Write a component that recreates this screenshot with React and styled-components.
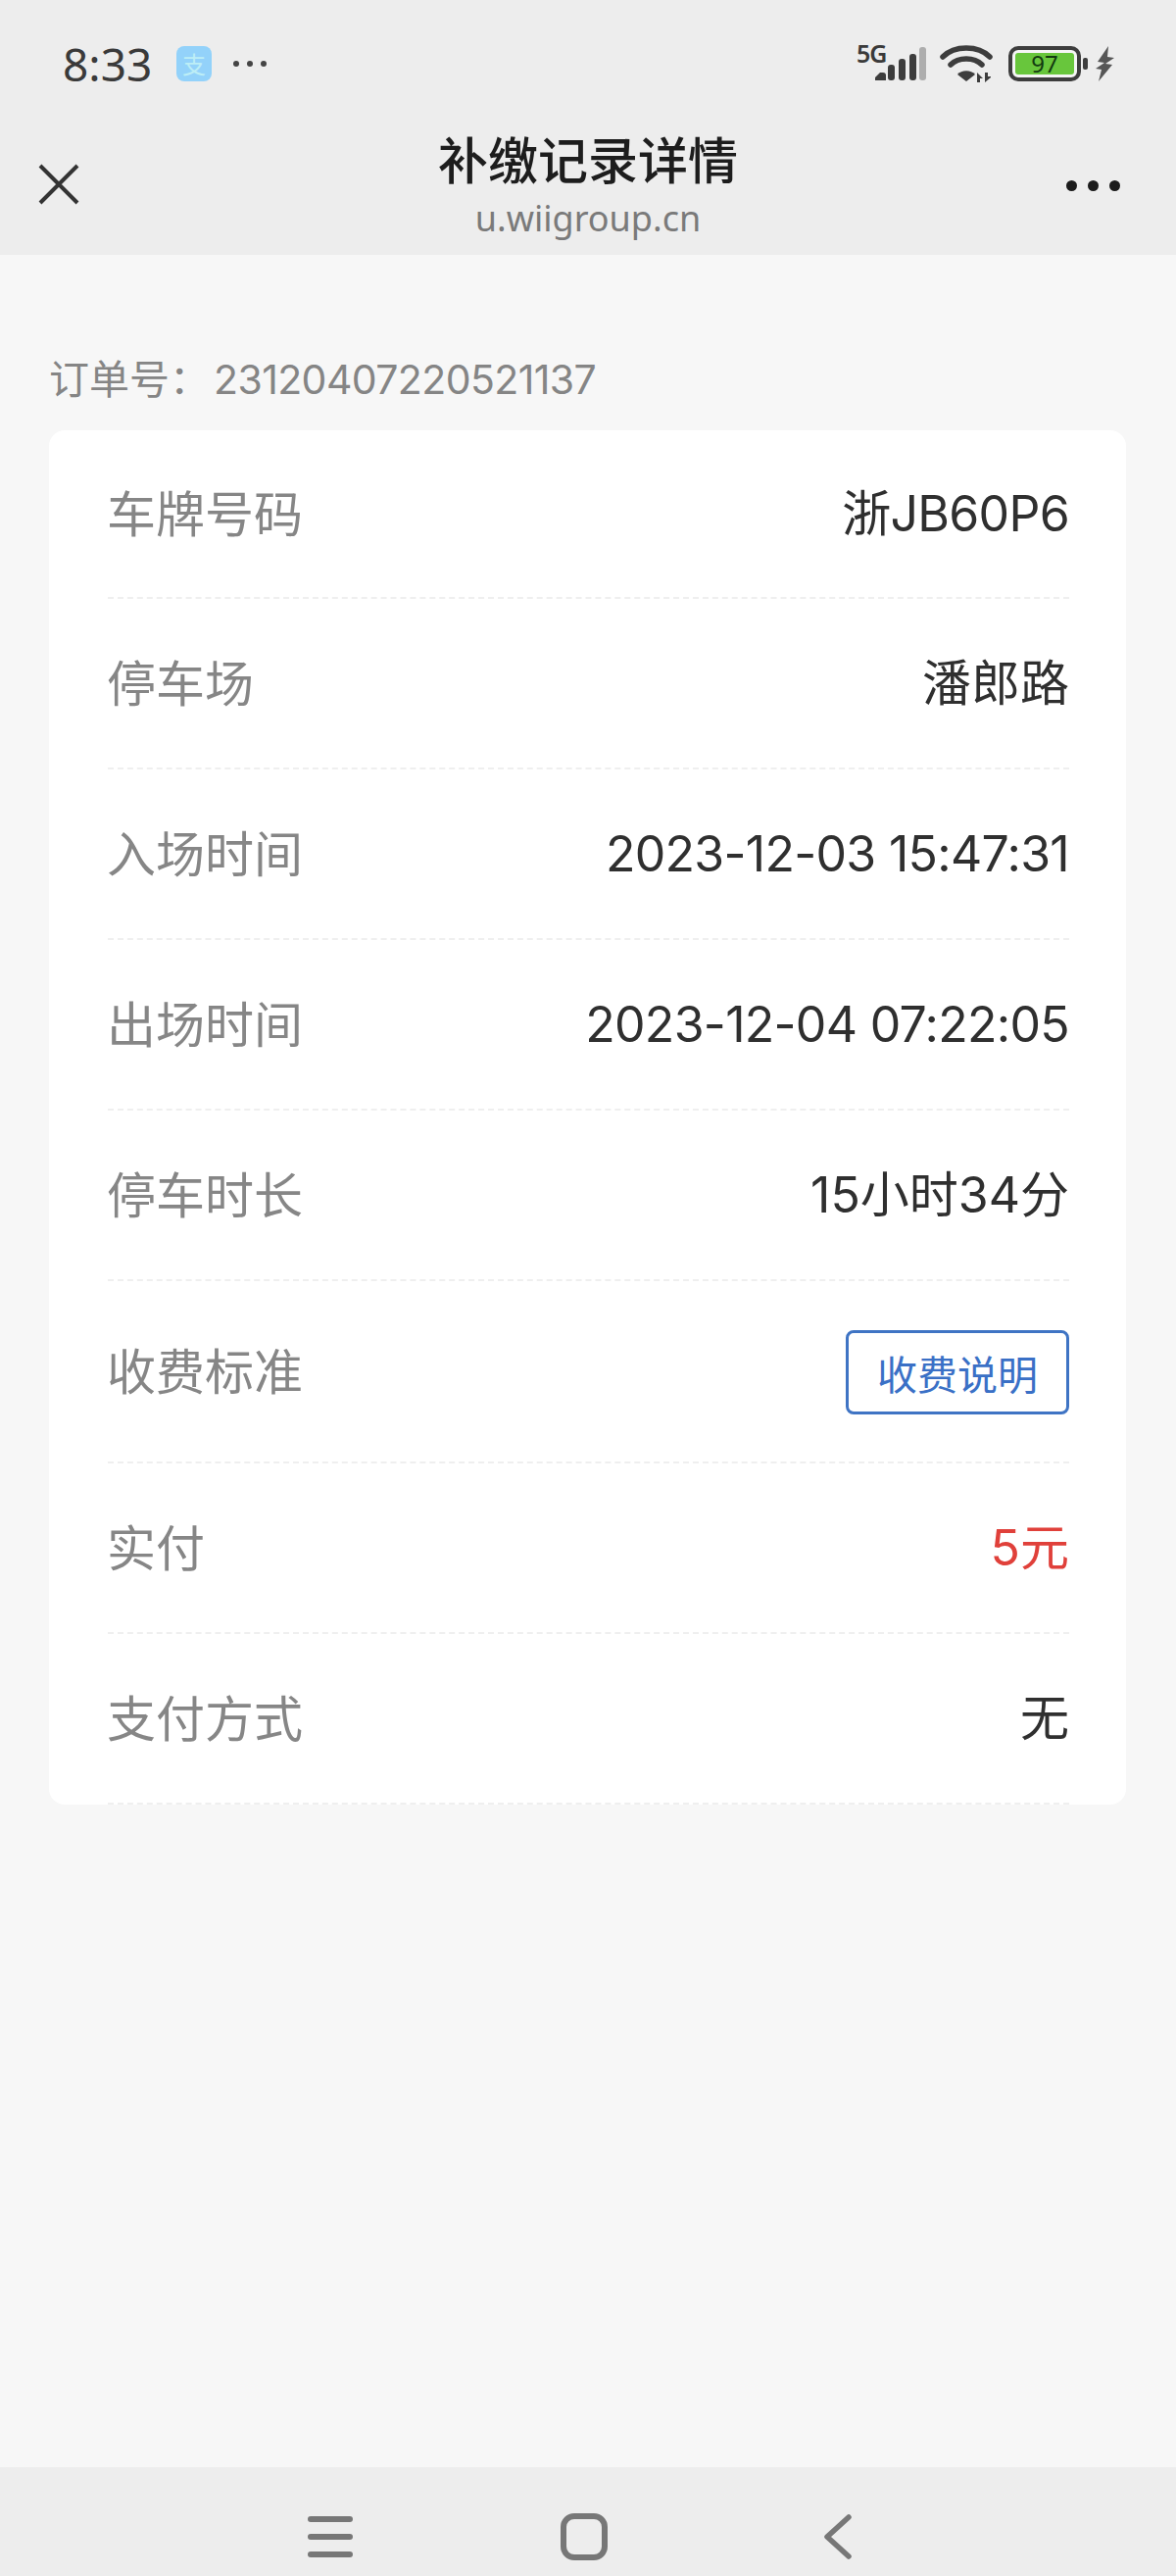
import styled, { createGlobalStyle } from "styled-components";

const GlobalStyle = createGlobalStyle`
    html, body {
        margin: 0;
        padding: 0;
        background: #f7f7f7;
    }
    * {
        box-sizing: border-box;
    }
`;

const FONT = `"Noto Sans CJK SC", "Noto Sans", sans-serif`;
const LATIN_FONT = `Inter, "Noto Sans CJK SC", sans-serif`;

const Page = styled.div`
    width: 1200px;
    height: 2628px;
    display: flex;
    flex-direction: column;
    background: #f7f7f7;
    font-family: ${FONT};
    overflow: hidden;
`;

const Header = styled.header`
    height: 260px;
    background: #ededed;
    display: flex;
    flex-direction: column;
`;

const StatusBar = styled.div`
    height: 130px;
    padding: 0 62px 0 64px;
    display: flex;
    align-items: center;
    justify-content: space-between;
`;

const StatusLeft = styled.div`
    display: flex;
    align-items: center;
`;

const Time = styled.span`
    font-family: "Noto Sans", sans-serif;
    font-size: 46px;
    line-height: 50px;
    color: #3a3a3a;
    width: 116px;
`;

const AppBadge = styled.span`
    width: 36px;
    height: 36px;
    border-radius: 8px;
    background: #93d2fa;
    color: #bdeef6;
    font-size: 24px;
    line-height: 36px;
    text-align: center;
`;

const MoreDots = styled.div`
    margin-left: 22px;
    display: flex;
    gap: 8px;
`;

const SmallDot = styled.i`
    width: 6px;
    height: 6px;
    border-radius: 50%;
    background: #444;
`;

const StatusRight = styled.div`
    display: flex;
    align-items: center;
    height: 40px;
`;

const SignalWrap = styled.div`
    position: relative;
    width: 69px;
    height: 38px;
`;

const FiveG = styled.span`
    position: absolute;
    left: -2px;
    top: -3px;
    font-family: "Noto Sans", sans-serif;
    font-size: 25px;
    font-weight: 600;
    line-height: 22px;
    letter-spacing: -1px;
    color: #3a3a3a;
`;

const SignalIcon = styled.svg`
    position: absolute;
    left: 17px;
    top: 2px;
`;

const WifiIcon = styled.svg`
    margin-left: 14px;
`;

const Battery = styled.div`
    margin-left: 16px;
    width: 74px;
    height: 36px;
    border: 4px solid #3d3d3d;
    border-radius: 10px;
    padding: 3px;
    background: #f5f5f5;
`;

const BatteryLevel = styled.div`
    width: 100%;
    height: 100%;
    background: #68c63c;
    border-radius: 3px;
    color: #123a10;
    font-family: "Noto Sans", sans-serif;
    font-size: 24px;
    line-height: 22px;
    text-align: center;
`;

const BatteryTip = styled.i`
    margin-left: 2px;
    width: 5px;
    height: 12px;
    border-radius: 2px;
    background: #3d3d3d;
`;

const BoltIcon = styled.svg`
    margin-left: 8px;
`;

const NavBar = styled.div`
    height: 130px;
    padding: 0 57px;
    display: grid;
    grid-template-columns: 1fr auto 1fr;
    align-items: center;
`;

const CloseIcon = styled.svg`
    margin: -14px 0 0 -18px;
`;

const TitleBlock = styled.div`
    display: flex;
    flex-direction: column;
    align-items: center;
    margin-top: -15px;
`;

const Title = styled.h1`
    margin: 0;
    font-size: 51px;
    font-weight: 500;
    line-height: 60px;
    color: #1d1d1d;
`;

const Subtitle = styled.div`
    margin-top: 10px;
    font-family: "Noto Sans", sans-serif;
    font-size: 36px;
    line-height: 44px;
    color: #7a7a7a;
`;

const NavDots = styled.div`
    justify-self: end;
    display: flex;
    gap: 11px;
    margin-top: -12px;
`;

const NavDot = styled.i`
    width: 11px;
    height: 11px;
    border-radius: 50%;
    background: #1c1c1c;
`;

const Main = styled.main`
    flex: 1;
    padding: 98px 51px 0 50px;
`;

const OrderNo = styled.div`
    height: 52px;
    margin-bottom: 29px;
    font-size: 41px;
    line-height: 52px;
    color: #858585;
`;

const OrderDigits = styled.span`
    font-family: ${LATIN_FONT};
    margin-left: 4px;
    letter-spacing: -0.6px;
`;

const Card = styled.section`
    background: #fff;
    border-radius: 16px;
    padding: 0 58px 0 60px;
`;

const Row = styled.div`
    height: ${({ tall }) => (tall ? 186 : 174)}px;
    border-bottom: 2px dashed #efefef;
    display: flex;
    align-items: center;
    justify-content: space-between;
    font-size: 50px;
    line-height: 60px;

    &:first-child {
        height: 172px;
    }
`;

const Label = styled.span`
    color: #868686;
    padding-bottom: 6px;
    margin-left: -1px;
`;

const Value = styled.span`
    font-family: ${LATIN_FONT};
    color: ${({ red }) => (red ? "#e0403a" : "#2f2f2f")};
    letter-spacing: ${({ tight }) => (tight ? "-0.7px" : "0")};
`;

const FeeButton = styled.button`
    width: 228px;
    height: 86px;
    margin-top: 2px;
    padding: 0;
    background: #fff;
    border: 3px solid #3f74c4;
    border-radius: 8px;
    font-family: ${FONT};
    font-size: 41px;
    color: #3a70c6;
`;

const BottomBar = styled.footer`
    height: 111px;
    background: #ededed;
    padding: 31px 0 0 314px;
    display: flex;
    align-items: center;
    gap: 212px;
`;

const BackIcon = styled.svg`
    margin-left: 8px;
`;

const rows = [
    { label: "车牌号码", value: "浙JB60P6", tight: true },
    { label: "停车场", value: "潘郎路" },
    { label: "入场时间", value: "2023-12-03 15:47:31", tight: true },
    { label: "出场时间", value: "2023-12-04 07:22:05", tight: true },
    { label: "停车时长", value: "15小时34分" },
    { label: "收费标准", button: "收费说明" },
    { label: "实付", value: "5元", red: true },
    { label: "支付方式", value: "无" },
];

const App = () => {
    return (
        <Page>
            <GlobalStyle />
            <Header>
                <StatusBar>
                    <StatusLeft>
                        <Time>8:33</Time>
                        <AppBadge>支</AppBadge>
                        <MoreDots>
                            <SmallDot />
                            <SmallDot />
                            <SmallDot />
                        </MoreDots>
                    </StatusLeft>
                    <StatusRight>
                        <SignalWrap>
                            <FiveG>5G</FiveG>
                            <SignalIcon width="52" height="34" viewBox="0 0 52 34">
                                <path d="M0 34v-3l5-5h3a3 3 0 0 1 3 3v5z" fill="#3d3d3d" />
                                <rect x="13" y="18" width="7" height="16" rx="3" fill="#3d3d3d" />
                                <rect x="24" y="12" width="7" height="22" rx="3" fill="#3d3d3d" />
                                <rect x="35" y="7" width="7" height="27" rx="3" fill="#3d3d3d" />
                                <rect x="45" y="0" width="7" height="34" rx="3" fill="#adadad" />
                            </SignalIcon>
                        </SignalWrap>
                        <WifiIcon width="54" height="40" viewBox="0 0 54 40">
                            <g fill="none" stroke="#3d3d3d" strokeWidth="5.5" strokeLinecap="round">
                                <path d="M3 13C15 1 39 1 51 13" />
                                <path d="M11 21C19 13 35 13 43 21" />
                            </g>
                            <path d="M18 31c4-5 14-5 18 0l-9 7z" fill="#3d3d3d" />
                            <path d="M38 29v10h3V35h3zM46 39V29h3v4h3v1z" fill="#3d3d3d" />
                        </WifiIcon>
                        <Battery>
                            <BatteryLevel>97</BatteryLevel>
                        </Battery>
                        <BatteryTip />
                        <BoltIcon width="20" height="36" viewBox="0 0 20 36">
                            <path d="M13 0 2 16l7 1-9 6 6 1-3 12 14-17-7-1 9-6-7-1z" fill="#565656" />
                        </BoltIcon>
                    </StatusRight>
                </StatusBar>
                <NavBar>
                    <CloseIcon width="42" height="42" viewBox="0 0 42 42">
                        <path
                            d="M2 2l38 38M40 2 2 40"
                            fill="none"
                            stroke="#333"
                            strokeWidth="4"
                        />
                    </CloseIcon>
                    <TitleBlock>
                        <Title>补缴记录详情</Title>
                        <Subtitle>u.wiigroup.cn</Subtitle>
                    </TitleBlock>
                    <NavDots>
                        <NavDot />
                        <NavDot />
                        <NavDot />
                    </NavDots>
                </NavBar>
            </Header>
            <Main>
                <OrderNo>
                    订单号：<OrderDigits>23120407220521137</OrderDigits>
                </OrderNo>
                <Card>
                    {rows.map((item, index) => {
                        return (
                            <Row key={index} tall={item.button}>
                                <Label>{item.label}</Label>
                                {item.button ? (
                                    <FeeButton>{item.button}</FeeButton>
                                ) : (
                                    <Value red={item.red} tight={item.tight}>
                                        {item.value}
                                    </Value>
                                )}
                            </Row>
                        );
                    })}
                </Card>
            </Main>
            <BottomBar>
                <svg width="46" height="44" viewBox="0 0 46 44">
                    <path
                        d="M3 4h40M3 22h40M3 40h40"
                        fill="none"
                        stroke="#777"
                        strokeWidth="6"
                        strokeLinecap="round"
                    />
                </svg>
                <svg width="48" height="48" viewBox="0 0 48 48">
                    <rect
                        x="3"
                        y="3"
                        width="42"
                        height="42"
                        rx="11"
                        fill="none"
                        stroke="#777"
                        strokeWidth="6"
                    />
                </svg>
                <BackIcon width="30" height="46" viewBox="0 0 30 46">
                    <path
                        d="M26 3 4 23l22 20"
                        fill="none"
                        stroke="#777"
                        strokeWidth="5.5"
                        strokeLinecap="round"
                        strokeLinejoin="round"
                    />
                </BackIcon>
            </BottomBar>
        </Page>
    );
};

export default App;
